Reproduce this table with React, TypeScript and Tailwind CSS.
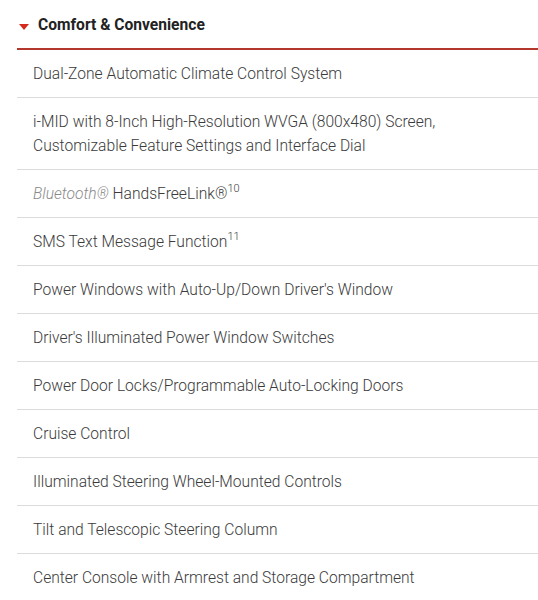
const items: React.ReactNode[] = [
  'Dual-Zone Automatic Climate Control System',
  <>
    i-MID with 8-Inch High-Resolution WVGA (800x480) Screen,
    <br />
    Customizable Feature Settings and Interface Dial
  </>,
  <>
    <span className="italic text-[#8a8a8a]">Bluetooth®</span> HandsFreeLink®
    <sup className="-top-[7px] text-[11px] leading-none">10</sup>
  </>,
  <>
    SMS Text Message Function<sup className="-top-[7px] text-[11px] leading-none">11</sup>
  </>,
  "Power Windows with Auto-Up/Down Driver's Window",
  "Driver's Illuminated Power Window Switches",
  'Power Door Locks/Programmable Auto-Locking Doors',
  'Cruise Control',
  'Illuminated Steering Wheel-Mounted Controls',
  'Tilt and Telescopic Steering Column',
  'Center Console with Armrest and Storage Compartment',
];

export default function App() {
  return (
    <div className="min-h-[600px] bg-white pl-[17px] font-['Roboto',sans-serif]">
      <div className="flex h-[48px] items-center gap-[9px] pl-[2px] pt-[3px]">
        <svg width="10" height="6" viewBox="0 0 10 6" className="mt-[2px]">
          <path d="M0 0h10L5 6z" fill="#d52b1e" />
        </svg>
        <span className="text-[15.6px] font-bold text-[#222]">Comfort &amp; Convenience</span>
      </div>
      <div className="h-[2px] bg-[#b4372d]" />
      <ul>
        {items.map((item, i) => (
          <li
            key={i}
            className="border-b border-[#dcdcdc] pt-[12px] pb-[11px] pl-[16px] text-[15.6px] font-light leading-[24px] text-[#3a3a3a]"
          >
            {item}
          </li>
        ))}
      </ul>
    </div>
  );
}
